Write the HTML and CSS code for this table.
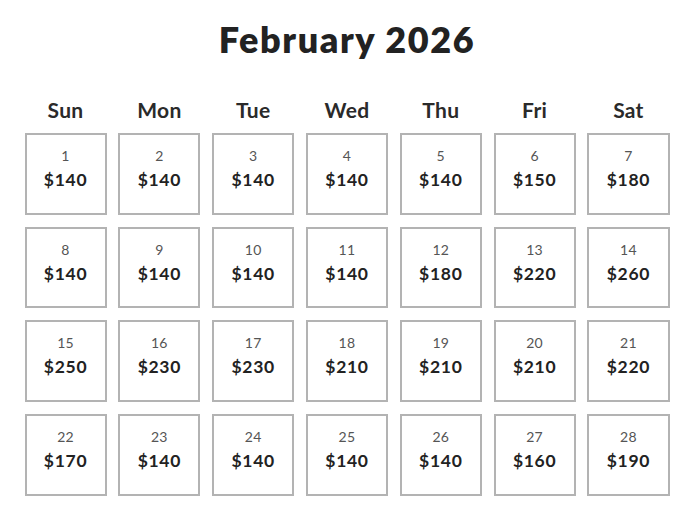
FILE: index.html
```html
<!DOCTYPE html>
<html>
<head>
<meta charset="utf-8">
<link rel="stylesheet" href="styles.css">
</head>
<body>
<div class="page">
  <h1 class="title">February 2026</h1>
  <div class="weekdays">
    <div class="dow">Sun</div><div class="dow">Mon</div><div class="dow">Tue</div><div class="dow">Wed</div><div class="dow">Thu</div><div class="dow">Fri</div><div class="dow">Sat</div>
  </div>
  <div class="calendar">
    <div class="day"><span class="num">1</span><span class="price">$140</span></div>
    <div class="day"><span class="num">2</span><span class="price">$140</span></div>
    <div class="day"><span class="num">3</span><span class="price">$140</span></div>
    <div class="day"><span class="num">4</span><span class="price">$140</span></div>
    <div class="day"><span class="num">5</span><span class="price">$140</span></div>
    <div class="day"><span class="num">6</span><span class="price">$150</span></div>
    <div class="day"><span class="num">7</span><span class="price">$180</span></div>
    <div class="day"><span class="num">8</span><span class="price">$140</span></div>
    <div class="day"><span class="num">9</span><span class="price">$140</span></div>
    <div class="day"><span class="num">10</span><span class="price">$140</span></div>
    <div class="day"><span class="num">11</span><span class="price">$140</span></div>
    <div class="day"><span class="num">12</span><span class="price">$180</span></div>
    <div class="day"><span class="num">13</span><span class="price">$220</span></div>
    <div class="day"><span class="num">14</span><span class="price">$260</span></div>
    <div class="day"><span class="num">15</span><span class="price">$250</span></div>
    <div class="day"><span class="num">16</span><span class="price">$230</span></div>
    <div class="day"><span class="num">17</span><span class="price">$230</span></div>
    <div class="day"><span class="num">18</span><span class="price">$210</span></div>
    <div class="day"><span class="num">19</span><span class="price">$210</span></div>
    <div class="day"><span class="num">20</span><span class="price">$210</span></div>
    <div class="day"><span class="num">21</span><span class="price">$220</span></div>
    <div class="day"><span class="num">22</span><span class="price">$170</span></div>
    <div class="day"><span class="num">23</span><span class="price">$140</span></div>
    <div class="day"><span class="num">24</span><span class="price">$140</span></div>
    <div class="day"><span class="num">25</span><span class="price">$140</span></div>
    <div class="day"><span class="num">26</span><span class="price">$140</span></div>
    <div class="day"><span class="num">27</span><span class="price">$160</span></div>
    <div class="day"><span class="num">28</span><span class="price">$190</span></div>
  </div>
</div>
</body>
</html>
```
FILE: styles.css
```css
html, body {
  margin: 0;
  padding: 0;
  background: #ffffff;
}
body {
  font-family: Lato, "Noto Sans", sans-serif;
  color: #222222;
}
.page {
  width: 694px;
  padding-top: 17px;
  display: flex;
  flex-direction: column;
  align-items: center;
}
.title {
  margin: 0;
  font-size: 36px;
  font-weight: 800;
  line-height: 44px;
  letter-spacing: 1.6px;
  color: #222222;
}
.weekdays,
.calendar {
  width: 645px;
  display: grid;
  grid-template-columns: repeat(7, 1fr);
  column-gap: 11.7px;
}
.weekdays {
  margin-top: 36px;
}
.calendar {
  margin-top: 10px;
  row-gap: 12px;
}
.dow {
  text-align: center;
  font-size: 21px;
  font-weight: 700;
  line-height: 26px;
  letter-spacing: 0.3px;
  color: #2a2a2a;
}
.day {
  box-sizing: border-box;
  height: 81.7px;
  border: 2px solid #b3b3b3;
  display: flex;
  flex-direction: column;
  align-items: center;
  padding-top: 12px;
}
.num {
  font-size: 14px;
  line-height: 18px;
  letter-spacing: 0.3px;
  color: #555555;
}
.price {
  margin-top: 4px;
  font-size: 17.5px;
  font-weight: 700;
  line-height: 22px;
  letter-spacing: 0.7px;
  color: #222222;
}
```
